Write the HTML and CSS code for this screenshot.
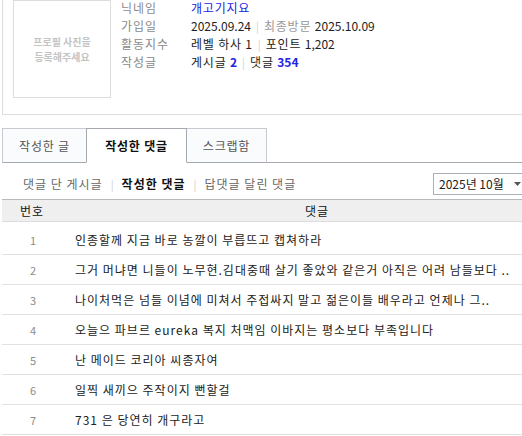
FILE: index.html
```html
<!DOCTYPE html>
<html>

<head>
    <meta name="viewport" content="width=device-width, initial-scale=1">
    <title>작성한 댓글</title>
    <link rel="stylesheet" href="styles.css">
</head>

<body>
    <div class="page">
        <div class="profile">
            <div class="photo">
                <div>프로필 사진을</div>
                <div>등록해주세요</div>
            </div>
            <div class="info">
                <div class="info-row">
                    <span class="label">닉네임</span>
                    <span class="nick">개고기지요</span>
                </div>
                <div class="info-row">
                    <span class="label">가입일</span>
                    <span class="num">2025.09.24</span><span class="sep">|</span><span class="muted">최종방문</span>&nbsp;<span class="num">2025.10.09</span>
                </div>
                <div class="info-row">
                    <span class="label">활동지수</span>
                    <span>레벨 하사 1</span><span class="sep">|</span><span>포인트 <span class="num">1,202</span></span>
                </div>
                <div class="info-row">
                    <span class="label">작성글</span>
                    <span>게시글 <b class="count">2</b></span><span class="sep">|</span><span>댓글 <b class="count">354</b></span>
                </div>
            </div>
        </div>

        <div class="tabs">
            <a class="tab first">작성한 글</a>
            <a class="tab active">작성한 댓글</a>
            <a class="tab last">스크랩함</a>
        </div>

        <div class="subnav">
            <div class="subnav-links">
                <a>댓글 단 게시글</a>
                <span class="sep">|</span>
                <a class="current">작성한 댓글</a>
                <span class="sep">|</span>
                <a>답댓글 달린 댓글</a>
            </div>
            <div class="month-select">
                <span>2025년 10월</span>
                <svg width="7" height="4" viewBox="0 0 7 4"><path d="M0 0h7L3.5 4z" fill="#555"/></svg>
            </div>
        </div>

        <div class="list">
            <div class="list-head">
                <span class="head-no">번호</span>
                <span class="head-text">댓글</span>
            </div>
            <div class="list-body">
                <div class="row"><span class="col-no">1</span><span class="col-text">인종할께 지금 바로 농깔이 부릅뜨고 캡쳐하라</span></div>
                <div class="row"><span class="col-no">2</span><span class="col-text">그거 머냐면 니들이 노무현.김대중때 살기 좋았와 같은거 아직은 어려 남들보다 ..</span></div>
                <div class="row"><span class="col-no">3</span><span class="col-text">나이처먹은 넘들 이념에 미쳐서 주접싸지 말고 젊은이들 배우라고 언제나 그..</span></div>
                <div class="row"><span class="col-no">4</span><span class="col-text">오늘으 파브르 eureka 복지 처맥임 이바지는 평소보다 부족입니다</span></div>
                <div class="row"><span class="col-no">5</span><span class="col-text">난 메이드 코리아 씨종자여</span></div>
                <div class="row"><span class="col-no">6</span><span class="col-text">일찍 새끼으 주작이지 뻔할걸</span></div>
                <div class="row"><span class="col-no">7</span><span class="col-text">731 은 당연히 개구라고</span></div>
            </div>
        </div>
    </div>
</body>

</html>
```

FILE: styles.css
```css
:root {
    --text-color: #222222;
    --label-color: #8a8a8a;
    --link-blue: #2323e6;
    --line-light: #dcdce2;
    --line-dark: #a6a8b0;
    --tab-bg: #fafbfd;
}

html,
body {
    overflow: hidden;
}

body {
    margin: 0;
    padding: 0;
    color: var(--text-color);
    font-family: "Noto Sans CJK KR", "Noto Sans", sans-serif;
    font-size: 12px;
    line-height: 18px;
}

.page {
    width: 568px;
    margin: -11px 0 0 2px;
}

/* profile card */

.profile {
    display: flex;
    gap: 10px;
    padding: 10px 10px 16px;
    border: 1px solid var(--line-light);
}

.photo {
    width: 98px;
    height: 98px;
    box-sizing: border-box;
    border: 1px solid #dddddd;
    display: flex;
    flex-direction: column;
    align-items: center;
    justify-content: center;
    color: #c4c4c4;
    font-size: 10px;
    line-height: 15px;
    font-weight: bold;
}

.info {
    margin-top: -1px;
}

.info-row {
    display: flex;
    align-items: center;
    height: 18px;
    white-space: nowrap;
    letter-spacing: 0.8px;
}

.info-row .num {
    letter-spacing: 0;
}

.label {
    width: 70px;
    color: var(--label-color);
    letter-spacing: 1px;
}

.nick {
    color: var(--link-blue);
}

.muted {
    color: #999999;
}

.sep {
    color: #d0d0d0;
    margin: 0 5px;
    font-size: 11px;
    letter-spacing: 0;
}

.count {
    color: var(--link-blue);
    letter-spacing: 0;
}

/* tabs */

.tabs {
    display: flex;
    margin-top: 13px;
    border-bottom: 1px solid var(--line-dark);
}

.tab {
    height: 35px;
    box-sizing: border-box;
    margin-bottom: -1px;
    display: flex;
    align-items: center;
    justify-content: center;
    background-color: var(--tab-bg);
    border-top: 1px solid #c8cad2;
    border-bottom: 1px solid var(--line-dark);
    color: #555555;
    letter-spacing: 0.8px;
    cursor: pointer;
}

.tab.first {
    width: 84px;
    border-left: 1px solid #c8cad2;
}

.tab.active {
    width: 101px;
    background-color: #ffffff;
    border: 1px solid var(--line-dark);
    border-bottom-color: #ffffff;
    color: #111111;
    font-weight: bold;
}

.tab.last {
    width: 80px;
    border-right: 1px solid #c8cad2;
}

/* sub navigation + month picker */

.subnav {
    display: flex;
    justify-content: space-between;
    align-items: center;
    padding: 10px 40px 4px 21px;
}

.subnav-links {
    display: flex;
    align-items: center;
    color: #666666;
    letter-spacing: 1px;
}

.subnav-links .sep {
    margin: 0 8px;
}

.subnav-links .current {
    color: #111111;
    font-weight: bold;
}

.month-select {
    width: 97px;
    height: 22px;
    box-sizing: border-box;
    display: flex;
    align-items: center;
    justify-content: space-between;
    padding: 0 8px 0 5px;
    border: 1px solid #aab0b8;
    color: #222222;
}

/* comment list */

.list-head {
    display: flex;
    align-items: center;
    height: 23px;
    box-sizing: border-box;
    background-color: #efefef;
    border-top: 1px solid #b8b8b8;
    border-bottom: 1px solid #dddddd;
    color: #111111;
    letter-spacing: 1px;
}

.head-no {
    width: 44px;
    padding-left: 18px;
}

.head-text {
    flex: 1;
    text-align: center;
}

.list-body {
    padding-top: 3px;
}

.row {
    display: flex;
    align-items: center;
    height: 30px;
    box-sizing: border-box;
    border-bottom: 1px solid #e2e2e2;
}

.col-no {
    width: 62px;
    text-align: center;
    color: #8c8c8c;
    font-size: 11px;
}

.col-text {
    padding-left: 11px;
    white-space: nowrap;
    letter-spacing: 1px;
}
```
